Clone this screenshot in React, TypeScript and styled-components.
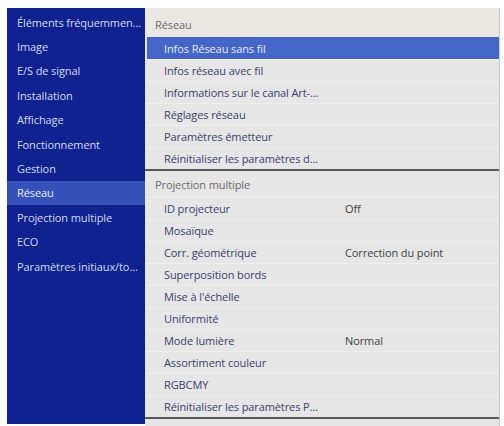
import React from "react";
import styled, { createGlobalStyle } from "styled-components";

const Global = createGlobalStyle`
  html, body { margin: 0; padding: 0; background: #ffffff; }
  body { font-family: "Open Sans", "Noto Sans", sans-serif; }
  * { box-sizing: border-box; }
`;

const Screen = styled.div`
  width: 504px;
  height: 426px;
  display: flex;
  padding: 8px 4px 0 7px;
  overflow: hidden;
`;

const Sidebar = styled.nav`
  width: 138px;
  height: 416px;
  background: #0f2290;
  padding-top: 2px;
  display: flex;
  flex-direction: column;
`;

const SideItem = styled.div<{ $active?: boolean }>`
  height: 24.4px;
  display: flex;
  align-items: center;
  padding-left: 10px;
  font-size: 11px;
  letter-spacing: -0.1px;
  color: ${(p) => (p.$active ? "#e8ecff" : "#d3d9f4")};
  background: ${(p) => (p.$active ? "#3452b9" : "transparent")};
  white-space: nowrap;
`;

const Panel = styled.section`
  width: 355px;
  height: 418px;
  background: #e6e6e6;
  border-right: 1px solid #c9c9c9;
  display: flex;
  flex-direction: column;
`;

const GroupHeader = styled.div<{ $warm?: boolean; $h: number; $drop: number }>`
  height: ${(p) => p.$h}px;
  display: flex;
  align-items: center;
  padding: ${(p) => p.$drop}px 0 0 10px;
  font-size: 11px;
  letter-spacing: -0.1px;
  color: #6b6b6e;
  background: ${(p) => (p.$warm ? "#ebe8e3" : "#e6e6e6")};
`;

const Row = styled.div<{ $active?: boolean }>`
  height: 22px;
  display: grid;
  grid-template-columns: 181px 1fr;
  align-items: center;
  margin-left: ${(p) => (p.$active ? "2px" : "0")};
  padding-left: ${(p) => (p.$active ? "17px" : "19px")};
  font-size: 11px;
  letter-spacing: -0.1px;
  color: ${(p) => (p.$active ? "#e4e9ff" : "#3b3f6c")};
  background: ${(p) => (p.$active ? "#4566c9" : "transparent")};
  border-top: 1px solid ${(p) => (p.$active ? "#4566c9" : "#efefef")};
  white-space: nowrap;
`;

const Value = styled.span`
  color: #3f3f42;
`;

const Divider = styled.div`
  height: 2px;
  background: #5a5a5e;
`;

const sideItems = [
  "Éléments fréquemmen...",
  "Image",
  "E/S de signal",
  "Installation",
  "Affichage",
  "Fonctionnement",
  "Gestion",
  "Réseau",
  "Projection multiple",
  "ECO",
  "Paramètres initiaux/to...",
];

const reseau = [
  "Infos Réseau sans fil",
  "Infos réseau avec fil",
  "Informations sur le canal Art-...",
  "Réglages réseau",
  "Paramètres émetteur",
  "Réinitialiser les paramètres d...",
];

const projection: [string, string?][] = [
  ["ID projecteur", "Off"],
  ["Mosaïque"],
  ["Corr. géométrique", "Correction du point"],
  ["Superposition bords"],
  ["Mise à l'échelle"],
  ["Uniformité"],
  ["Mode lumière", "Normal"],
  ["Assortiment couleur"],
  ["RGBCMY"],
  ["Réinitialiser les paramètres P..."],
];

export default function App() {
  return (
    <>
      <Global />
      <Screen>
        <Sidebar>
          {sideItems.map((s) => (
            <SideItem key={s} $active={s === "Réseau"}>
              {s}
            </SideItem>
          ))}
        </Sidebar>
        <Panel>
          <GroupHeader $warm $h={29} $drop={3}>Réseau</GroupHeader>
          {reseau.map((r, i) => (
            <Row key={r} $active={i === 0}>
              <span>{r}</span>
            </Row>
          ))}
          <Divider />
          <GroupHeader $h={26} $drop={0}>Projection multiple</GroupHeader>
          {projection.map(([l, v]) => (
            <Row key={l}>
              <span>{l}</span>
              {v ? <Value>{v}</Value> : <span />}
            </Row>
          ))}
          <Divider />
        </Panel>
      </Screen>
    </>
  );
}
